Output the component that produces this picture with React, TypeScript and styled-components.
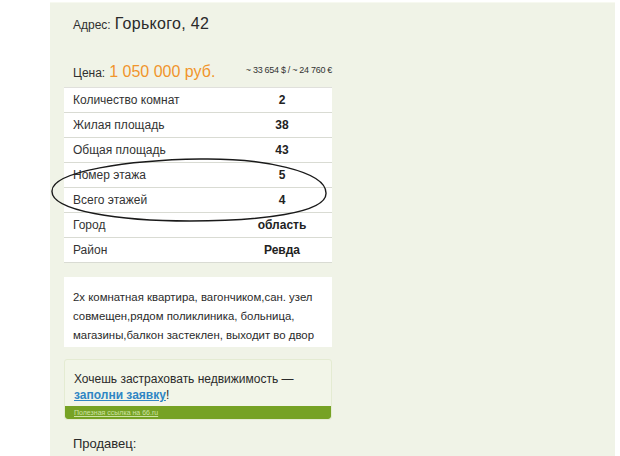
import React from "react";
import styled, { createGlobalStyle } from "styled-components";

const Global = createGlobalStyle`
  html, body { margin: 0; padding: 0; background: #ffffff; }
  body { font-family: "Liberation Sans", Arial, sans-serif; color: #2b2b2b; }
`;

const Page = styled.div`
  width: 620px;
  height: 456px;
  overflow: hidden;
  padding: 2px 5px 0 50px;
  box-sizing: border-box;
`;

const Panel = styled.div`
  position: relative;
  background: #f0f3e7;
  border-top: 1px solid #f7f9f0;
  min-height: 480px;
  padding: 0 283px 0 14px;
`;

const AddressLine = styled.div`
  display: flex;
  align-items: baseline;
  gap: 4px;
  height: 40px;
  padding-top: 12px;
  box-sizing: border-box;
  padding-left: 9px;
`;

const SmallLabel = styled.span`
  font-size: 12px;
  color: #2f2f2f;
`;

const AddressValue = styled.span`
  font-size: 16px;
  letter-spacing: 0.3px;
  color: #2a2a2a;
`;

const PriceLine = styled.div`
  display: flex;
  align-items: baseline;
  height: 44px;
  padding: 20px 0 0 9px;
  box-sizing: border-box;
`;

const PriceValue = styled.span<{ $color: string }>`
  font-size: 16px;
  color: ${(p) => p.$color};
  margin-left: 4px;
`;

const Conversion = styled.span`
  margin-left: auto;
  font-size: 9px;
  letter-spacing: -0.3px;
  color: #333;
  position: relative;
  top: -4px;
`;

const Table = styled.div`
  display: flex;
  flex-direction: column;
  border-top: 1px solid #e0e0dc;
`;

const Row = styled.div`
  display: grid;
  grid-template-columns: 1fr 100px;
  align-items: center;
  height: 24px;
  background: #ffffff;
  border-bottom: 1px solid #d9dbd3;
  font-size: 12px;
`;

const Label = styled.span`
  padding-left: 9px;
  color: #333;
`;

const Value = styled.span`
  text-align: center;
  font-weight: bold;
  color: #222;
`;

const Description = styled.div`
  margin-top: 14px;
  background: #ffffff;
  padding: 11px 0 2px 9px;
  font-size: 11.4px;
  line-height: 19px;
  white-space: nowrap;
  color: #2a2a2a;
`;

const Promo = styled.div`
  margin-top: 12px;
  border: 1px solid #e4ebd2;
  border-radius: 3px;
  background: #f2f5e8;
  overflow: hidden;
`;

const PromoText = styled.div`
  padding: 11px 9px 3px;
  font-size: 12px;
  line-height: 16px;
  color: #2a2a2a;
`;

const PromoLink = styled.a`
  color: #2f86c4;
  font-weight: bold;
  text-decoration: underline;
`;

const PromoBar = styled.div`
  background: #76a224;
  height: 13px;
  display: flex;
  align-items: center;
  padding-left: 9px;
  border-radius: 0 0 3px 3px;
`;

const BarLink = styled.span`
  font-size: 7px;
  color: #cfe3a6;
  text-decoration: underline;
`;

const Seller = styled.div`
  margin-top: 16px;
  padding-left: 9px;
  font-size: 13px;
  color: #2a2a2a;
`;

const Ellipse = styled.svg`
  position: absolute;
  left: 0;
  top: 150px;
  pointer-events: none;
`;

const rows: [string, string][] = [
  ["Количество комнат", "2"],
  ["Жилая площадь", "38"],
  ["Общая площадь", "43"],
  ["Номер этажа", "5"],
  ["Всего этажей", "4"],
  ["Город", "область"],
  ["Район", "Ревда"],
];

export default function App() {
  return (
    <>
      <Global />
      <Page>
        <Panel>
          <AddressLine>
            <SmallLabel>Адрес:</SmallLabel>
            <AddressValue>Горького, 42</AddressValue>
          </AddressLine>
          <PriceLine>
            <SmallLabel>Цена:</SmallLabel>
            <PriceValue $color="#f0952c">1 050 000 руб.</PriceValue>
            <Conversion>~ 33 654 $ / ~ 24 760 €</Conversion>
          </PriceLine>
          <Table>
            {rows.map(([l, v]) => (
              <Row key={l}>
                <Label>{l}</Label>
                <Value>{v}</Value>
              </Row>
            ))}
          </Table>
          <Description>
            2х комнатная квартира, вагончиком,сан. узел<br />
            совмещен,рядом поликлиника, больница,<br />
            магазины,балкон застеклен, выходит во двор
          </Description>
          <Promo>
            <PromoText>
              Хочешь застраховать недвижимость —<br />
              <PromoLink>заполни заявку</PromoLink>!
            </PromoText>
            <PromoBar>
              <BarLink>Полезная ссылка на 66.ru</BarLink>
            </PromoBar>
          </Promo>
          <Seller>Продавец:</Seller>
          <Ellipse width="290" height="75" viewBox="0 0 290 75">
            <path
              d="M 150 6 C 212 5, 276 18, 276 40 C 277 60, 210 68, 140 68 C 70 68, 1 58, 2 38 C 2 18, 80 7, 150 6 Z"
              fill="none"
              stroke="#1a1a1a"
              strokeWidth="1.4"
            />
          </Ellipse>
        </Panel>
      </Page>
    </>
  );
}
